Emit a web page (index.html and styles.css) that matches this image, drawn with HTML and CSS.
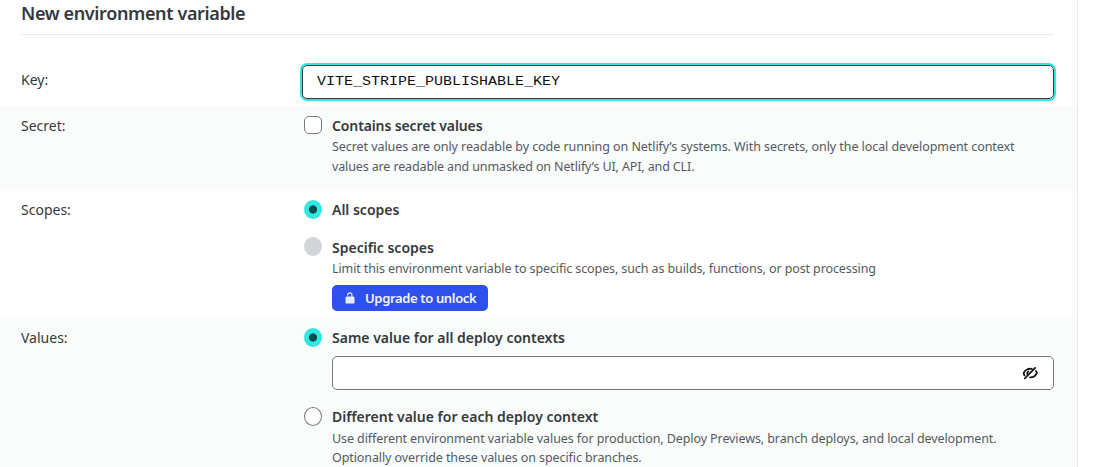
FILE: index.html
```html
<!DOCTYPE html>
<html lang="en">
<head>
<meta charset="utf-8">
<title>New environment variable</title>
<link rel="stylesheet" href="styles.css">
</head>
<body>
<main class="card">
  <h2 class="title">New environment variable</h2>
  <form class="form">
    <section class="row row-key">
      <div class="label">Key:</div>
      <div class="key-input"><span class="key-text">VITE_STRIPE_PUBLISHABLE_KEY</span></div>
    </section>
    <section class="row row-secret shaded">
      <div class="label">Secret:</div>
      <div class="option">
        <span class="box"></span>
        <div class="body">
          <div class="name name-secret">Contains secret values</div>
          <p class="help help-secret">Secret values are only readable by code running on Netlify’s systems. With secrets, only the local development context<br><span class="tight">values are readable and unmasked on Netlify’s UI, API, and CLI.</span></p>
        </div>
      </div>
    </section>
    <section class="row row-scopes">
      <div class="label">Scopes:</div>
      <div class="options">
        <div class="option">
          <span class="radio on"></span>
          <div class="body"><div class="name">All scopes</div></div>
        </div>
        <div class="option">
          <span class="radio off"></span>
          <div class="body">
            <div class="name">Specific scopes</div>
            <p class="help">Limit this environment variable to specific scopes, such as builds, functions, or post processing</p>
            <button class="upgrade" type="button">
              <svg class="lock" width="10" height="12" viewBox="0 0 10 12"><path d="M2.700 3.500V3a2.100 2.100 0 0 1 4.200 0V5" fill="none" stroke="#e9edff" stroke-width="1.200"/><rect x="0.500" y="4.600" width="9" height="7" rx="1.200" fill="#e9edff"/></svg>
              <span>Upgrade to unlock</span>
            </button>
          </div>
        </div>
      </div>
    </section>
    <section class="row row-values shaded">
      <div class="label">Values:</div>
      <div class="options">
        <div class="option">
          <span class="radio on"></span>
          <div class="body">
            <div class="name">Same value for all deploy contexts</div>
            <div class="value-input">
              <svg width="16" height="14" viewBox="0 0 16 14" fill="none" stroke="#15181b" stroke-width="1.800" stroke-linecap="round"><path d="M2.800 12.300 13.200 1.900M9.800 2.900C6 2.200 2.300 4.400 1.700 7.300c0 .9.300 1.600.8 2.100M13.900 5c.6.700.9 1.400.9 2.100C14 9.800 11.200 11.400 8 11.400M5.100 7.700C5.100 6.700 5.600 5.900 6.400 5.500"/></svg>
            </div>
          </div>
        </div>
        <div class="option">
          <span class="radio"></span>
          <div class="body">
            <div class="name">Different value for each deploy context</div>
            <p class="help">Use different environment variable values for production, Deploy Previews, branch deploys, and local development.<br>Optionally override these values on specific branches.</p>
          </div>
        </div>
      </div>
    </section>
  </form>
</main>
</body>
</html>
```
FILE: styles.css
```css
* { box-sizing: border-box; }
body {
  margin: 0;
  height: 467px;
  overflow: hidden;
  background: #fff;
  color: #35393d;
  font: 14px/20px "Noto Sans", sans-serif;
}
.card {
  width: 1078px;
  height: 467px;
  overflow: hidden;
  border-right: 1px solid #e9ebeb;
}
.title {
  margin: 0 23px 0 21px;
  height: 35px;
  padding-top: 2px;
  border-bottom: 1px solid #e9ebeb;
  font-size: 18px;
  line-height: 22px;
  font-weight: 600;
  letter-spacing: -0.370px;
}
.row {
  display: grid;
  grid-template-columns: 281px 752px;
  padding-left: 21px;
}
.shaded { background: #fafcfb; }
.label { line-height: 20px; }
.row-key { height: 71px; padding-top: 30px; }
.key-input {
  height: 34px;
  border: 1px solid #35393d;
  border-radius: 5px;
  box-shadow: 0 0 0 2px #32e6e2;
  padding: 6px 14px;
  font: 15px/20px "Liberation Mono", monospace;
  color: #0c0f12;
}
.key-text {
  display: inline-block;
  transform: scaleY(0.84);
}
.row-key .label { padding-top: 5px; }
.row-secret { height: 85px; padding-top: 10px; }
.row-scopes { height: 128px; padding-top: 9px; }
.row-values { height: 150px; padding-top: 9px; }
.option { display: grid; grid-template-columns: 30px 722px; }
.box, .radio {
  width: 18px;
  height: 18px;
  margin-left: 2px;
  border: 1px solid #747a80;
  background: #fff;
}
.box { border-radius: 5px; }
.radio { height: 19px; border-radius: 50%; }
.radio.on { border: 0; background: radial-gradient(circle, #054a4e 0 3.700px, #32e6e2 4.500px); }
.radio.off { margin-top: -1px; border: 0; background: #d1d5da; }
.name { font-weight: 600; }
.name-secret { letter-spacing: -0.120px; }
.help {
  margin: 1px 0 0;
  font-size: 12.500px;
  line-height: 20px;
  letter-spacing: -0.105px;
  color: #545a61;
}
.help-secret { letter-spacing: -0.068px; }
.tight { letter-spacing: -0.130px; }
.row-values .help { margin-top: 2px; line-height: 19px; letter-spacing: -0.095px; }
.row-scopes .option:first-child { height: 38px; }
.upgrade {
  display: flex;
  align-items: center;
  gap: 10px;
  width: 156px;
  height: 26px;
  margin-top: 6px;
  padding: 0 13px;
  border: 0;
  border-radius: 5px;
  background: #2e51ed;
  color: #f4f6ff;
  font: 600 13px/20px "Noto Sans", sans-serif;
  letter-spacing: -0.350px;
  white-space: nowrap;
}
.lock { flex: none; }
.value-input {
  display: flex;
  align-items: center;
  justify-content: flex-end;
  height: 34px;
  margin: 8px 0 17px;
  padding-right: 15px;
  border: 1px solid #747a80;
  border-radius: 5px;
  background: #fff;
}
```
